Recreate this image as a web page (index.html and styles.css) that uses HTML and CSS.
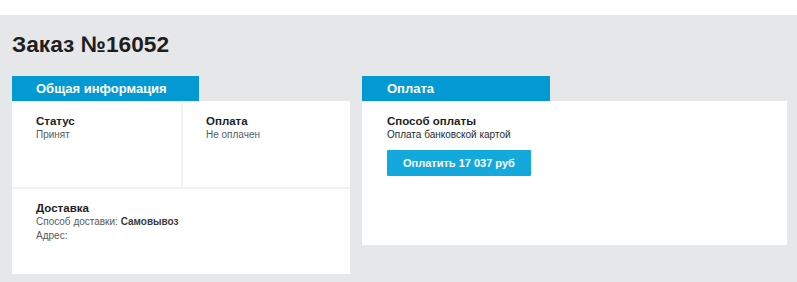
FILE: index.html
```html
<!DOCTYPE html>
<html lang="ru">
<head>
<meta charset="utf-8">
<title>Заказ №16052</title>
<link rel="stylesheet" href="styles.css">
</head>
<body>
<div class="page">
  <h1 class="title">Заказ №16052</h1>
  <div class="cards">
    <section class="card card-info">
      <div class="tab">Общая информация</div>
      <div class="body info-grid">
        <div class="cell">
          <div class="label">Статус</div>
          <div class="value">Принят</div>
        </div>
        <div class="cell">
          <div class="label">Оплата</div>
          <div class="value">Не оплачен</div>
        </div>
        <div class="cell cell-wide">
          <div class="label">Доставка</div>
          <div class="value">Способ доставки: <b>Самовывоз</b></div>
          <div class="value">Адрес:</div>
        </div>
      </div>
    </section>
    <section class="card card-pay">
      <div class="tab">Оплата</div>
      <div class="body pay-body">
        <div class="label">Способ оплаты</div>
        <div class="value dark">Оплата банковской картой</div>
        <button class="pay-btn">Оплатить 17 037 руб</button>
      </div>
    </section>
  </div>
</div>
</body>
</html>
```

FILE: styles.css
```css
html, body {
  margin: 0;
  padding: 0;
  background: #ffffff;
  font-family: "Liberation Sans", Arial, sans-serif;
}

.page {
  margin-top: 15px;
  background: #e6e7e9;
  height: 267px;
  padding: 16px 10px 0 12px;
  box-sizing: border-box;
}

.title {
  margin: 0;
  font-size: 22.7px;
  line-height: 26px;
  font-weight: bold;
  color: #1e1e1e;
}

.cards {
  display: grid;
  grid-template-columns: 338px 425px;
  column-gap: 12px;
  align-items: start;
  margin-top: 19px;
}

.tab {
  background: #0399d2;
  color: #ffffff;
  font-size: 13px;
  font-weight: bold;
  line-height: 25px;
  height: 25px;
  padding-left: 24px;
  box-sizing: border-box;
}

.card-info .tab { width: 187px; }
.card-pay .tab { width: 188px; padding-left: 25px; }

.body {
  background: #ffffff;
}

.info-grid {
  display: grid;
  grid-template-columns: 169px 167px;
  grid-template-rows: 86px 85px;
  column-gap: 2px;
  row-gap: 2px;
  background: #f2f2f2;
}

.cell {
  background: #ffffff;
  padding: 13px 24px 0 24px;
}

.cell:nth-child(2) {
  padding-left: 23px;
}

.cell-wide {
  grid-column: 1 / 3;
  padding-top: 12px;
}

.label {
  font-size: 11.5px;
  line-height: 14px;
  font-weight: bold;
  color: #1e1e1e;
}

.value {
  font-size: 10px;
  line-height: 14px;
  color: #5a5a5a;
}

.value b {
  color: #3a3a3a;
}

.value.dark {
  color: #2a2a2a;
}

.pay-body {
  height: 144px;
  box-sizing: border-box;
  padding: 13px 25px 0 25px;
}

.pay-btn {
  display: block;
  margin-top: 8px;
  height: 26px;
  padding: 0 16px;
  border: none;
  border-radius: 1px;
  background: #14a9dd;
  color: #ffffff;
  font-family: "Liberation Sans", Arial, sans-serif;
  font-size: 11px;
  font-weight: bold;
  cursor: pointer;
}
```
